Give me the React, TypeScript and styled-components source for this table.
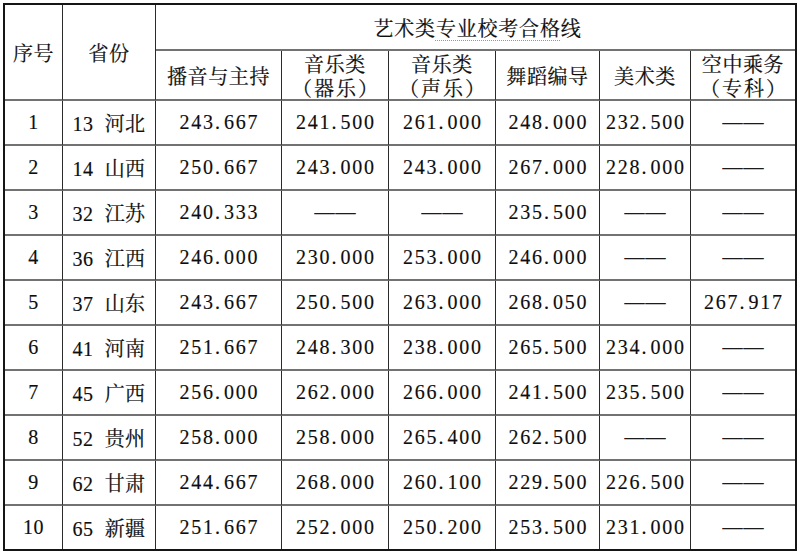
import React from "react";
import styled, { createGlobalStyle } from "styled-components";

const Global = createGlobalStyle`
  html, body {
    margin: 0;
    padding: 0;
    background: #ffffff;
  }
  body {
    font-family: "Liberation Serif", "Noto Serif CJK SC", "Noto Sans CJK SC", serif;
    color: #0d0d0d;
  }
`;

const Page = styled.div`
  padding: 3px 0 0 3px;
`;

const Sheet = styled.div`
  display: grid;
  grid-template-columns: 58px 93px 126px 107px 107px 104px 91px 104px;
  grid-template-rows: 46px 50px repeat(9, 45px) 43px;
  width: max-content;
  border: 2px solid #151515;
  background: #ffffff;
  font-size: 20px;
`;

const Cell = styled.div<{
  $col?: string;
  $row?: string;
  $lastCol?: boolean;
  $lastRow?: boolean;
}>`
  box-sizing: border-box;
  display: flex;
  align-items: center;
  justify-content: center;
  text-align: center;
  white-space: nowrap;
  grid-column: ${(p) => p.$col ?? "auto"};
  grid-row: ${(p) => p.$row ?? "auto"};
  border-right: ${(p) => (p.$lastCol ? "none" : "1px solid #2a2a2a")};
  border-bottom: ${(p) => (p.$lastRow ? "none" : "2px solid #727272")};
  letter-spacing: 0.6px;
  -webkit-text-stroke: 0.2px #0d0d0d;
`;

const TwoLine = styled.div`
  display: flex;
  flex-direction: column;
  align-items: center;
  line-height: 24px;
  padding-top: 3px;
`;

const Paren = styled.span`
  letter-spacing: 2px;
  margin-right: -2px;
`;

const Title = styled.span`
  letter-spacing: 0.8px;
  padding-left: 4px;
`;

const Squiggle = styled.span`
  text-decoration: underline dotted #5fbf5f;
  text-decoration-thickness: 1px;
  text-underline-offset: 4px;
`;

const NumText = styled.span`
  font-family: "Liberation Serif", serif;
  letter-spacing: 1.8px;
  margin-right: -1.8px;
  -webkit-text-stroke: 0.15px #0d0d0d;
`;

const Dot = styled.span`
  display: inline-block;
  width: 9px;
  letter-spacing: 0;
  text-align: left;
`;

const Province = styled.span`
  word-spacing: 6px;
  letter-spacing: 0.4px;
`;

const Code = styled.span`
  font-family: "Liberation Serif", serif;
  -webkit-text-stroke: 0.15px #0d0d0d;
`;

const Dash = styled.span`
  font-family: "Liberation Serif", serif;
  letter-spacing: 1px;
  margin-right: -1px;
  color: #222;
`;

type Row = {
  no: string;
  code: string;
  name: string;
  values: string[];
};

const rows: Row[] = [
  { no: "1", code: "13", name: "河北", values: ["243.667", "241.500", "261.000", "248.000", "232.500", "——"] },
  { no: "2", code: "14", name: "山西", values: ["250.667", "243.000", "243.000", "267.000", "228.000", "——"] },
  { no: "3", code: "32", name: "江苏", values: ["240.333", "——", "——", "235.500", "——", "——"] },
  { no: "4", code: "36", name: "江西", values: ["246.000", "230.000", "253.000", "246.000", "——", "——"] },
  { no: "5", code: "37", name: "山东", values: ["243.667", "250.500", "263.000", "268.050", "——", "267.917"] },
  { no: "6", code: "41", name: "河南", values: ["251.667", "248.300", "238.000", "265.500", "234.000", "——"] },
  { no: "7", code: "45", name: "广西", values: ["256.000", "262.000", "266.000", "241.500", "235.500", "——"] },
  { no: "8", code: "52", name: "贵州", values: ["258.000", "258.000", "265.400", "262.500", "——", "——"] },
  { no: "9", code: "62", name: "甘肃", values: ["244.667", "268.000", "260.100", "229.500", "226.500", "——"] },
  { no: "10", code: "65", name: "新疆", values: ["251.667", "252.000", "250.200", "253.500", "231.000", "——"] },
];

const subHeaders: string[][] = [
  ["播音与主持"],
  ["音乐类", "（器乐）"],
  ["音乐类", "（声乐）"],
  ["舞蹈编导"],
  ["美术类"],
  ["空中乘务", "（专科）"],
];

function Value({ v }: { v: string }) {
  if (v === "——") return <Dash>——</Dash>;
  const [a, b] = v.split(".");
  return (
    <NumText>
      {a}
      <Dot>.</Dot>
      {b}
    </NumText>
  );
}

export default function App() {
  return (
    <>
      <Global />
      <Page>
        <Sheet>
          <Cell $col="1" $row="1 / span 2">序号</Cell>
          <Cell $col="2" $row="1 / span 2">省份</Cell>
          <Cell $col="3 / span 6" $row="1" $lastCol>
            <Title>
              艺术类<Squiggle>专业校考合格</Squiggle>线
            </Title>
          </Cell>
          {subHeaders.map((lines, i) => (
            <Cell key={i} $row="2" $lastCol={i === subHeaders.length - 1}>
              {lines.length === 1 ? (
                lines[0]
              ) : (
                <TwoLine>
                  <span>{lines[0]}</span>
                  <Paren>{lines[1]}</Paren>
                </TwoLine>
              )}
            </Cell>
          ))}
          {rows.map((r, ri) => {
            const lastRow = ri === rows.length - 1;
            return (
              <React.Fragment key={r.no}>
                <Cell $lastRow={lastRow}>
                  <Code>{r.no}</Code>
                </Cell>
                <Cell $lastRow={lastRow}>
                  <Province>
                    <Code>{r.code}</Code> {r.name}
                  </Province>
                </Cell>
                {r.values.map((v, vi) => (
                  <Cell key={vi} $lastRow={lastRow} $lastCol={vi === r.values.length - 1}>
                    <Value v={v} />
                  </Cell>
                ))}
              </React.Fragment>
            );
          })}
        </Sheet>
      </Page>
    </>
  );
}
